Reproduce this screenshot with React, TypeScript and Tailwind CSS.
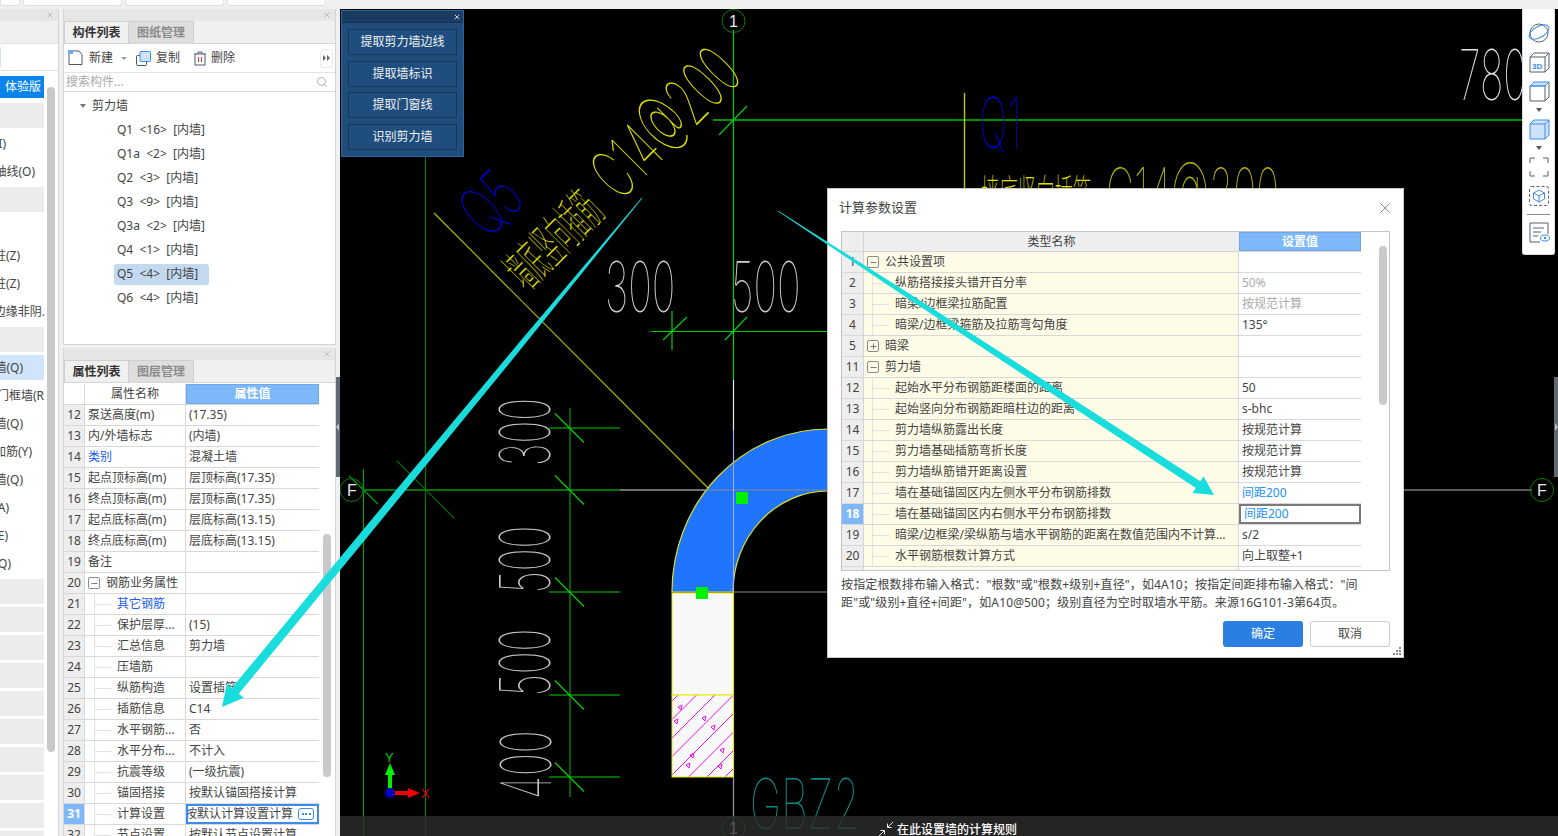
import React from "react";
import { Search, X, Minus, Plus } from "lucide-react";

const CJK = "font-['Noto_Sans','Noto_Sans_CJK_SC',sans-serif]";

/* ---------- left narrow panel ---------- */
const navRows: { t?: string; c?: string; kind?: "gray" | "sel" }[] = [
  { kind: "gray" },
  { t: "轴网(I)", c: "w-[6px]" },
  { t: "辅助轴线(O)", c: "w-[35px]" },
  { kind: "gray" },
  {},
  { t: "框架柱(Z)", c: "w-[20px]" },
  { t: "构造柱(Z)", c: "w-[20px]" },
  { t: "约束边缘非阴.", c: "w-[45px]" },
  { kind: "gray" },
  { t: "剪力墙(Q)", c: "w-[23px]", kind: "sel" },
  { t: "门框墙(R", c: "w-[44px]" },
  { t: "砌体墙(Q)", c: "w-[23px]" },
  { t: "砌体加筋(Y)", c: "w-[32px]" },
  { t: "保温墙(Q)", c: "w-[23px]" },
  { t: "暗梁(A)", c: "w-[9px]" },
  { t: "墙垛(E)", c: "w-[8px]" },
  { t: "幕墙(Q)", c: "w-[11px]" },
  { kind: "gray" },
  { kind: "gray" },
  { kind: "gray" },
  { kind: "gray" },
  { kind: "gray" },
  { kind: "gray" },
  { kind: "gray" },
  { kind: "gray" },
  { kind: "gray" },
  { kind: "gray" },
];

function PanelClose() {
  return (
    <div className="h-[12px] bg-[#e6e6e6] flex items-center justify-end pr-[3px] shrink-0">
      <X size={10} strokeWidth={1.6} className="text-[#aaaaaa]" />
    </div>
  );
}

function NavPanel() {
  return (
    <div className="w-[59px] h-full border-r border-[#d4d4d4] flex flex-col shrink-0 bg-white overflow-hidden">
      <PanelClose />
      <div className="h-[22px] bg-[#f0f0f0] shrink-0" />
      <div className="h-[28px] border-y border-[#e2e2e2] bg-white shrink-0 flex items-center">
        <div className="w-[1px] h-[20px] bg-[#cfe2f8]" />
      </div>
      <div className="flex flex-1 min-h-0">
        <div className="w-[44px] shrink-0 overflow-hidden flex flex-col">
          <div className="h-[5px] shrink-0" />
          <div className="h-[22px] bg-[#0a84ec] text-white text-[12px] flex items-center justify-end pr-[3px] shrink-0">体验版</div>
          <div className="h-[5px] shrink-0" />
          {navRows.map((r, i) => (
            <div key={i} className={`h-[25px] mb-[3px] shrink-0 ${r.kind === "gray" ? "bg-[#ececec]" : r.kind === "sel" ? "bg-[#d0e4fb]" : ""} flex items-center`}>
              {r.t && (
                <div className={`${r.c} flex justify-end whitespace-nowrap text-[12px] text-[#444]`}>
                  <span className="shrink-0">{r.t}</span>
                </div>
              )}
            </div>
          ))}
        </div>
        <div className="w-[14px] shrink-0 pl-[3px] pt-[16px] pb-[84px]">
          <div className="w-[8px] h-full rounded-full bg-[#c9c9c9]" />
        </div>
      </div>
    </div>
  );
}

/* ---------- component list panel ---------- */
const tree = ["Q1  <16>  [内墙]", "Q1a  <2>  [内墙]", "Q2  <3>  [内墙]", "Q3  <9>  [内墙]", "Q3a  <2>  [内墙]", "Q4  <1>  [内墙]", "Q5  <4>  [内墙]", "Q6  <4>  [内墙]"];

function Tabs({ a, b }: { a: string; b: string }) {
  return (
    <div className="h-[23px] bg-[#f0f0f0] flex shrink-0 border-b border-[#d6d6d6]">
      <div className="w-[65px] border-x border-t border-[#cfcfcf] font-bold text-[#333] flex items-center justify-center text-[12px]">{a}</div>
      <div className="w-[65px] border-r border-t border-[#cfcfcf] bg-[#dedede] text-[#8b8b8b] font-bold flex items-center justify-center text-[12px]">{b}</div>
    </div>
  );
}

function ListPanel() {
  return (
    <div className="h-[336px] flex flex-col border-x border-b border-[#d4d4d4] bg-white shrink-0">
      <PanelClose />
      <Tabs a="构件列表" b="图纸管理" />
      <div className="h-[29px] flex items-center border-b border-[#e4e4e4] text-[12px] text-[#444] shrink-0 pl-[4px]">
        <svg width="15" height="16" viewBox="0 0 15 16" fill="none" className="mr-[6px]">
          <path d="M1 4v10.5h13V4.5L11 1H5" stroke="#4a5670" strokeWidth="1" />
          <path d="M0 0h5v4H0z" fill="#4d94ee" opacity=".8" />
        </svg>
        <span>新建</span>
        <span className="ml-[8px] mr-[9px] w-0 h-0 border-x-[3px] border-x-transparent border-t-[3px] border-t-[#999]" />
        <svg width="15" height="15" viewBox="0 0 15 15" fill="none" className="mr-[5px]">
          <rect x="0.5" y="4.5" width="10" height="10" rx="1" stroke="#4a5670" />
          <rect x="4" y="0.5" width="10.5" height="10" rx="1" fill="#cfe2fa" stroke="#3d8bf0" />
        </svg>
        <span>复制</span>
        <svg width="14" height="15" viewBox="0 0 14 15" fill="none" className="ml-[13px] mr-[4px]">
          <path d="M1 3h12M5 3V1h4v2M2 3v11h10V3" stroke="#4a5670" />
          <path d="M5.5 6v5M8.5 6v5" stroke="#d33" />
        </svg>
        <span>删除</span>
        <div className="ml-auto mr-[2px] w-[13px] h-[19px] border border-[#e8e8e8] rounded-[3px] flex items-center justify-center">
          <svg width="8" height="6" viewBox="0 0 8 6"><path d="M0 0l3 3-3 3zM4 0l3 3-3 3z" fill="#666" /></svg>
        </div>
      </div>
      <div className="h-[19px] flex items-center border-b border-[#dcdcdc] pl-[2px] pr-[7px] text-[12px] text-[#aaaaaa] shrink-0">
        <span>搜索构件...</span>
        <Search size={12} className="ml-auto text-[#b0b0b0]" />
      </div>
      <div className="flex-1 pt-[2px] text-[12px] text-[#444]">
        <div className="h-[24px] flex items-center pl-[16px]">
          <span className="w-0 h-0 border-x-[3.5px] border-x-transparent border-t-[4px] border-t-[#777] mr-[6px]" />
          <span>剪力墙</span>
        </div>
        {tree.map((t) => (
          <div key={t} className="h-[24px] flex items-center pl-[50px]">
            <span className={`pl-[3px] h-[21px] flex items-center rounded-[3px] whitespace-pre ${t.startsWith("Q5") ? "bg-[#c3d9f0] pr-[11px]" : "pr-[3px]"}`}>{t}</span>
          </div>
        ))}
      </div>
    </div>
  );
}

/* ---------- property panel ---------- */
type P = { n: number; name: string; val?: string; tree?: boolean; blue?: boolean; group?: boolean };
const props: P[] = [
  { n: 12, name: "泵送高度(m)", val: "(17.35)" },
  { n: 13, name: "内/外墙标志", val: "(内墙)" },
  { n: 14, name: "类别", val: "混凝土墙", blue: true },
  { n: 15, name: "起点顶标高(m)", val: "层顶标高(17.35)" },
  { n: 16, name: "终点顶标高(m)", val: "层顶标高(17.35)" },
  { n: 17, name: "起点底标高(m)", val: "层底标高(13.15)" },
  { n: 18, name: "终点底标高(m)", val: "层底标高(13.15)" },
  { n: 19, name: "备注" },
  { n: 20, name: "钢筋业务属性", group: true },
  { n: 21, name: "其它钢筋", tree: true, blue: true },
  { n: 22, name: "保护层厚...", val: "(15)", tree: true },
  { n: 23, name: "汇总信息", val: "剪力墙", tree: true },
  { n: 24, name: "压墙筋", tree: true },
  { n: 25, name: "纵筋构造", val: "设置插筋", tree: true },
  { n: 26, name: "插筋信息", val: "C14", tree: true },
  { n: 27, name: "水平钢筋...", val: "否", tree: true },
  { n: 28, name: "水平分布...", val: "不计入", tree: true },
  { n: 29, name: "抗震等级", val: "(一级抗震)", tree: true },
  { n: 30, name: "锚固搭接", val: "按默认锚固搭接计算", tree: true },
  { n: 31, name: "计算设置", tree: true },
  { n: 32, name: "节点设置", val: "按默认节点设置计算", tree: true },
];

function TreeLine({ left }: { left: string }) {
  return (
    <span className={`${left} h-full border-l border-[#e2e2e2] flex items-center shrink-0`}>
      <span className="w-[16px] border-t border-[#e2e2e2]" />
    </span>
  );
}

function BoxToggle({ plus, cls }: { plus?: boolean; cls: string }) {
  return (
    <span className={`${cls} w-[12px] h-[12px] border border-[#8c8c8c] rounded-[2px] flex items-center justify-center shrink-0`}>
      {plus ? <Plus size={9} className="text-[#555]" /> : <Minus size={9} className="text-[#555]" />}
    </span>
  );
}

function PropPanel() {
  return (
    <div className="flex-1 min-h-0 flex flex-col border-x border-[#d4d4d4] bg-white overflow-hidden">
      <PanelClose />
      <Tabs a="属性列表" b="图层管理" />
      <div className="flex flex-1 min-h-0 pt-[1px]">
        <div className="w-[255px] shrink-0 text-[12px] text-[#444] overflow-hidden">
          <div className="h-[21px] flex border-b border-[#d8d8d8]">
            <div className="w-[21px] border-r border-[#d8d8d8]" />
            <div className="w-[101px] border-r border-[#d8d8d8] flex items-center justify-center">属性名称</div>
            <div className="flex-1 bg-[#7fb8f8] text-white font-bold flex items-center justify-center border border-[#6fa8e8]">属性值</div>
          </div>
          {props.map((p) => (
            <div key={p.n} className="h-[21px] flex border-b border-[#d8d8d8]">
              <div className={`w-[21px] shrink-0 border-r border-[#d8d8d8] flex items-center justify-center ${p.n === 31 ? "bg-[#7fb8f8] text-white font-bold" : "bg-[#eeeeee]"}`}>{p.n}</div>
              <div className={`w-[101px] shrink-0 border-r border-[#d8d8d8] flex items-center whitespace-nowrap ${p.blue ? "text-[#1a5cf0]" : ""}`}>
                {p.tree && <TreeLine left="ml-[9px]" />}
                {p.group && <BoxToggle cls="ml-[3px] mr-[6px]" />}
                <span className={p.tree ? "ml-[6px]" : p.group ? "" : "ml-[3px]"}>{p.name}</span>
              </div>
              {p.n === 31 ? (
                <div className="flex-1 min-w-0 border-2 border-[#3d8bf0] flex items-center justify-end overflow-hidden pr-[2px] whitespace-nowrap">
                  <span className="shrink-0">按默认计算设置计算</span>
                  <span className="ml-[5px] mr-[1px] w-[16px] h-[12px] border border-[#3d8bf0] rounded-[3px] flex items-center justify-center gap-[1.5px] shrink-0">
                    <i className="w-[2px] h-[2px] bg-[#3d8bf0]" /><i className="w-[2px] h-[2px] bg-[#3d8bf0]" /><i className="w-[2px] h-[2px] bg-[#3d8bf0]" />
                  </span>
                </div>
              ) : (
                <div className="flex-1 min-w-0 flex items-center pl-[3px] whitespace-nowrap">{p.val}</div>
              )}
            </div>
          ))}
        </div>
        <div className="w-[17px] shrink-0 pl-[4px] pt-[150px] pb-[59px]">
          <div className="w-[8px] h-full bg-[#c9c9c9] rounded-full" />
        </div>
      </div>
    </div>
  );
}

/* ---------- CAD canvas ---------- */
function Cad({ x, y, rot = 0, sx, size, fill, family = "Inter, sans-serif", children }: { x: number; y: number; rot?: number; sx: number; size: number; fill: string; family?: string; children: string }) {
  return (
    <text transform={`translate(${x} ${y}) rotate(${rot}) scale(${sx} 1)`} fontSize={size} fontFamily={family} fontWeight={100} fill={fill}>
      {children}
    </text>
  );
}

const G = "#00d000";
const DG = "#0b7a0b";
const CJKF = "'Noto Sans CJK SC', sans-serif";

/* 45° hatch lines clamped to the 61.5 × 82 rectangle */
const HX = 672;
const HY = 695;
const HW = 61.5;
const HH = 82;
function hatchLine(o: number) {
  const startOver = Math.max(0, HW - 0 - (o - HH) - HW + 0);
  const xa = Math.max(o - HH, 0);
  const ya = HH - (xa - (o - HH));
  const xb = Math.min(o, HW);
  const yb = HH - (xb - (o - HH));
  return startOver >= 0 ? [HX + xa, HY + ya, HX + xb, HY + yb] : [0, 0, 0, 0];
}
const hatch = [6, 24.5, 43, 61.5, 80, 98.5, 117, 135];

function Drawing() {
  const seg = (a: number, b: number, c: number, d: number, s = G, w = 1.2) => <line x1={a} y1={b} x2={c} y2={d} stroke={s} strokeWidth={w} />;
  const ticks = [428, 490, 592, 695, 777];
  return (
    <svg className="absolute inset-0 w-full h-full" viewBox="340 9 1218 827">
      {seg(733.5, 30, 733.5, 380)}
      {seg(733.5, 380, 733.5, 430, "#e8e8e8")}
      {seg(733.5, 430, 733.5, 836, "#9a9a9a")}
      {seg(425.5, 157, 425.5, 836, DG)}
      {seg(363.5, 469, 363.5, 836, "#0a9a0a")}
      {seg(570, 408, 570, 797, "#0a9a0a")}
      {seg(363, 490, 620, 490, "#0a9a0a", 1.5)}
      {seg(620, 490, 1532, 490, "#777777", 1.5)}
      {seg(713, 120, 1522, 120, "#00c000", 1.5)}
      {seg(651, 331.5, 828, 331.5, G, 1.2)}
      {seg(672, 311, 672, 350)}
      {seg(719, 135, 747, 106)}
      {seg(663, 340, 687, 317)}
      {seg(725, 340, 747, 317)}
      {[428, 592, 695, 777].map((y) => <g key={y}>{seg(549, y, 620, y)}</g>)}
      {ticks.map((y) => <g key={y}>{seg(555, y - 14.5, 584, y + 14.5)}</g>)}
      {seg(349, 476, 378, 504, "#0a9a0a")}
      {seg(397, 461, 454, 518, "#0a6a0a")}

      {seg(434, 213, 709, 489, "#b4b400")}
      {seg(964.5, 93, 964.5, 190, "#c8c800", 1.4)}

      <circle cx="733.5" cy="21" r="11.5" fill="none" stroke="#0a7a0a" />
      <Cad x={729} y={27} sx={1} size={16} fill="#e8e8e8" family="'Liberation Sans', sans-serif">1</Cad>
      <circle cx="351.5" cy="490" r="11.5" fill="none" stroke="#0a7a0a" />
      <Cad x={347} y={496} sx={1} size={16} fill="#e8e8e8" family="'Liberation Sans', sans-serif">F</Cad>
      <circle cx="1542" cy="490" r="11.5" fill="none" stroke="#0a7a0a" />
      <Cad x={1537} y={496} sx={1} size={16} fill="#e8e8e8" family="'Liberation Sans', sans-serif">F</Cad>
      <circle cx="733.5" cy="828" r="11.5" fill="none" stroke="#0a7a0a" />
      <Cad x={729} y={834} sx={1} size={16} fill="#e8e8e8" family="'Liberation Sans', sans-serif">1</Cad>

      {/* rotated annotation */}
      <Cad x={488} y={240} rot={-45} sx={0.62} size={68} fill="#0000e0">Q5</Cad>
      <Cad x={620} y={202} rot={-45} sx={0.58} size={68} fill="#e0e000">C14@200</Cad>
      <Cad x={527} y={292} rot={-45} sx={0.37} size={50} fill="#d8d800" family={CJKF}>墙底竖向插筋</Cad>

      {/* straight annotation */}
      <Cad x={979} y={148} sx={0.54} size={70} fill="#0000d8">Q1</Cad>
      <Cad x={1106} y={217} sx={0.57} size={68} fill="#b8b800">C14@200</Cad>
      <Cad x={981} y={213} sx={0.4} size={46} fill="#e0e000" family={CJKF}>墙底竖向插筋</Cad>

      {/* dimension text */}
      <Cad x={605} y={312} sx={0.57} size={70} fill="#d0d0d0">300</Cad>
      <Cad x={731} y={312} sx={0.57} size={70} fill="#d0d0d0">500</Cad>
      <Cad x={1459} y={100} sx={0.56} size={70} fill="#e0e0e0">780</Cad>
      <Cad x={550} y={466} rot={-90} sx={0.55} size={70} fill="#c8c8c8">300</Cad>
      <Cad x={550} y={593} rot={-90} sx={0.55} size={70} fill="#c8c8c8">500</Cad>
      <Cad x={550} y={696} rot={-90} sx={0.55} size={70} fill="#c8c8c8">500</Cad>
      <Cad x={551} y={799} rot={-90} sx={0.55} size={70} fill="#c8c8c8">400</Cad>
      <Cad x={750} y={829} sx={0.6} size={70} fill="#0a8a8a">GBZ2</Cad>

      {/* wall */}
      <path d="M672 592A156 163 0 0 1 828 429L828 491A95 101 0 0 0 733 592Z" fill="#1f75fe" stroke="#e0e020" strokeWidth="1.2" />
      {seg(733, 592, 828, 592, "#8a8a8a")}
      {seg(620, 490, 828, 490, "#8a8a8a", 1.2)}
      {seg(733.5, 430, 733.5, 592, "#a8a8ff", 1)}
      <rect x="672" y="593" width="61.5" height="102" fill="#f8f8f8" stroke="#e8e800" />
      <rect x="736" y="492" width="12" height="12" fill="#00f000" />
      <rect x="696" y="587" width="12" height="12" fill="#00f000" />
      <rect x="672" y="695" width="61.5" height="82" fill="#f8f8f8" />
      {hatch.map((o) => {
        const [a, b, c, d] = hatchLine(o);
        return <path key={o} d={`M${a} ${b}L${c} ${d}`} fill="none" stroke="#f010f0" strokeWidth="1" />;
      })}
      {[[678, 707], [702, 718], [674, 721], [711, 727], [690, 755], [686, 765], [718, 766], [720, 750]].map(([a, b]) => (
        <polygon key={a} points={`${a},${b} ${a + 4},${b - 2} ${a + 3},${b + 3}`} fill="none" stroke="#f010f0" />
      ))}
      <rect x="672" y="695" width="61.5" height="82" fill="none" stroke="#e8e800" />

      {/* axis */}
      <line x1="390" y1="793" x2="390" y2="772" stroke="#00ee00" strokeWidth="4" />
      <polygon points="390,763 385,775 395,775" fill="#00ee00" />
      <line x1="390" y1="793" x2="410" y2="793" stroke="#ee0000" strokeWidth="4" />
      <polygon points="420,793 408,788 408,798" fill="#ee0000" />
      <circle cx="390" cy="793" r="5" fill="#0000c0" />
      <Cad x={385} y={762} sx={1} size={13} fill="#00d000" family="'Liberation Sans', sans-serif">Y</Cad>
      <Cad x={421} y={798} sx={1} size={13} fill="#e00000" family="'Liberation Sans', sans-serif">X</Cad>
    </svg>
  );
}

function FloatPanel() {
  return (
    <div className="absolute left-[1px] top-[1px] w-[123px] h-[147px] bg-[#1f4e7e] border border-[#2d639c] text-[12px] text-[#f0f0f0] flex flex-col">
      <div className="h-[12px] bg-[#1a3c60] border-b border-[#16304e] flex items-center justify-end pr-[2px] shrink-0">
        <X size={8} strokeWidth={3} className="text-[#c0d0e0]" />
      </div>
      <div className="flex flex-col gap-[5.67px] px-[6px] pt-[6px]">
        {["提取剪力墙边线", "提取墙标识", "提取门窗线", "识别剪力墙"].map((t) => (
          <div key={t} className="h-[26px] border border-[#17375a] flex items-center justify-center">{t}</div>
        ))}
      </div>
    </div>
  );
}

/* ---------- view toolbar ---------- */
const I = "#56606e";
const B = "#3d8bf0";
function Caret() {
  return <span className="w-0 h-0 border-x-[3px] border-x-transparent border-t-[4px] border-t-[#555] my-[1px]" />;
}
function ViewBar() {
  return (
    <div className="absolute right-[3px] top-0 w-[33px] h-[246px] bg-white rounded-b-[3px] border border-[#dcdcdc] border-t-0 flex flex-col items-center pt-[13px]">
      <svg width="22" height="22" viewBox="0 0 22 22" fill="none">
        <circle cx="11" cy="11" r="9" stroke={I} />
        <ellipse cx="11" cy="10" rx="11" ry="5.5" transform="rotate(-30 11 10)" stroke={B} />
      </svg>
      <svg width="22" height="22" viewBox="0 0 22 22" fill="none" className="mt-[7px]">
        <path d="M2 6h15v15H2zM2 6l4-4h15v15l-4 4M17 6l4-4" stroke={I} />
        <text x="4" y="18" fontSize="8" fontWeight="700" fontFamily="Liberation Sans" fill={B}>3D</text>
      </svg>
      <svg width="22" height="22" viewBox="0 0 22 22" fill="none" className="mt-[7px]">
        <path d="M2 6v15h15V6M17 21l4-4V2" stroke={I} />
        <path d="M2 6l4-4h15l-4 4z" fill="#cfe2fa" stroke={B} />
        <path d="M2 6h15" stroke={B} />
      </svg>
      <div className="mt-[5px] mb-[5px] flex"><Caret /></div>
      <svg width="22" height="22" viewBox="0 0 22 22" fill="none">
        <path d="M2 6h15v15H2zM2 6l4-4h15v15l-4 4M17 6l4-4" fill="#cfe2fa" stroke={B} />
      </svg>
      <div className="mt-[5px] mb-[5px] flex"><Caret /></div>
      <svg width="22" height="22" viewBox="0 0 22 22" fill="none">
        <path d="M2 7V2h5M15 2h5v5M20 15v5h-5M7 20H2v-5" stroke={I} />
      </svg>
      <svg width="22" height="22" viewBox="0 0 22 22" fill="none" className="mt-[7px]">
        <rect x="1.5" y="1.5" width="19" height="19" rx="2" stroke={I} strokeDasharray="3 2" />
        <path d="M11 5l5.5 3v6L11 17l-5.5-3V8zM5.5 8L11 11l5.5-3M11 11v6" stroke={B} />
      </svg>
      <div className="w-[23px] border-t border-[#888] mt-[7px]" />
      <svg width="22" height="22" viewBox="0 0 22 22" fill="none" className="mt-[6px]">
        <path d="M20 13V2H2v19h10" stroke={I} />
        <path d="M5 7h11M5 11h8M5 15h5" stroke={I} />
        <ellipse cx="17" cy="17" rx="4.5" ry="3" stroke={B} />
        <circle cx="17" cy="17" r="1.2" fill={B} />
      </svg>
    </div>
  );
}

/* ---------- dialog ---------- */
type R = { n: number; name?: string; val?: string; kind?: "minus" | "plus"; tone?: string };
const rows: R[] = [
  { n: 1, name: "公共设置项", kind: "minus" },
  { n: 2, name: "纵筋搭接接头错开百分率", val: "50%", tone: "text-[#aaaaaa]" },
  { n: 3, name: "暗梁/边框梁拉筋配置", val: "按规范计算", tone: "text-[#aaaaaa]" },
  { n: 4, name: "暗梁/边框梁箍筋及拉筋弯勾角度", val: "135°" },
  { n: 5, name: "暗梁", kind: "plus" },
  { n: 11, name: "剪力墙", kind: "minus" },
  { n: 12, name: "起始水平分布钢筋距楼面的距离", val: "50" },
  { n: 13, name: "起始竖向分布钢筋距暗柱边的距离", val: "s-bhc" },
  { n: 14, name: "剪力墙纵筋露出长度", val: "按规范计算" },
  { n: 15, name: "剪力墙基础插筋弯折长度", val: "按规范计算" },
  { n: 16, name: "剪力墙纵筋错开距离设置", val: "按规范计算" },
  { n: 17, name: "墙在基础锚固区内左侧水平分布钢筋排数", val: "间距200", tone: "text-[#1e90ff]" },
  { n: 18, name: "墙在基础锚固区内右侧水平分布钢筋排数", val: "间距200", tone: "text-[#1e90ff]" },
  { n: 19, name: "暗梁/边框梁/梁纵筋与墙水平钢筋的距离在数值范围内不计算...", val: "s/2" },
  { n: 20, name: "水平钢筋根数计算方式", val: "向上取整+1" },
];

function Dialog() {
  return (
    <div className="absolute left-[487px] top-[179px] w-[577px] h-[470px] bg-white border border-[#c8c8c8] text-[12px] text-[#444] flex flex-col">
      <div className="h-[42px] flex items-center pl-[11px] pr-[9px] pb-[4px] text-[13px] shrink-0">
        <span>计算参数设置</span>
        <X size={18} strokeWidth={1.1} className="ml-auto text-[#777]" />
      </div>
      <div className="mx-[13px] h-[340px] border border-[#c4c4c4] flex overflow-hidden shrink-0">
        <div className="w-[519px] shrink-0">
          <div className="h-[20px] flex border-b border-[#d4d4d4]">
            <div className="w-[22px] bg-[#eeeeee] border-r border-[#d4d4d4]" />
            <div className="w-[375px] bg-[#eeeeee] flex items-center justify-center">类型名称</div>
            <div className="flex-1 bg-[#7fb8f8] text-white font-bold flex items-center justify-center border border-[#6fa8e8]">设置值</div>
          </div>
          {rows.map((r) => (
            <div key={r.n} className="h-[21px] flex border-b border-[#d8d8d8]">
              <div className={`w-[22px] shrink-0 border-r border-[#d4d4d4] flex items-center justify-center ${r.n === 18 ? "bg-[#7fb8f8] text-white font-bold" : "bg-[#eeeeee]"}`}>{r.n}</div>
              <div className="w-[375px] shrink-0 bg-[#fefce6] border-r border-[#d8d8d8] flex items-center whitespace-nowrap">
                {r.kind ? (
                  <>
                    <BoxToggle plus={r.kind === "plus"} cls="ml-[3px] mr-[6px]" />
                    <span>{r.name}</span>
                  </>
                ) : (
                  <>
                    <TreeLine left="ml-[8px]" />
                    <span className="ml-[6px]">{r.name}</span>
                  </>
                )}
              </div>
              <div className={`flex-1 min-w-0 flex items-center pl-[3px] ${r.tone ?? ""} ${r.n === 18 ? "border-2 border-[#7a7a7a] pl-[2px]" : ""}`}>{r.val}</div>
            </div>
          ))}
          <div className="h-[4px] flex">
            <div className="w-[22px] bg-[#eeeeee] border-r border-[#d4d4d4]" />
            <div className="w-[375px] bg-[#fefce6] border-r border-[#d8d8d8]" />
          </div>
        </div>
        <div className="flex-1 pl-[18px] pt-[14px] pb-[165px]">
          <div className="w-[8px] h-full rounded-full bg-[#c9c9c9]" />
        </div>
      </div>
      <div className="mx-[13px] mt-[5px] leading-[18px] tracking-[0.13px] text-[#444] h-[36px] shrink-0">
        按指定根数排布输入格式："根数"或"根数+级别+直径"，如4A10；按指定间距排布输入格式："间距"或"级别+直径+间距"，如A10@500；级别直径为空时取墙水平筋。来源16G101-3第64页。
      </div>
      <div className="flex justify-end gap-[7px] pr-[13px] mt-[9px]">
        <div className="w-[80px] h-[26px] rounded-[3px] bg-[#2b7fe0] text-white flex items-center justify-center">确定</div>
        <div className="w-[80px] h-[26px] rounded-[3px] border border-[#cccccc] flex items-center justify-center">取消</div>
      </div>
      <svg width="8" height="8" viewBox="0 0 8 8" className="absolute right-[2px] bottom-[2px]">
        <path d="M6 0h2v2H6zM3 3h2v2H3zM6 3h2v2H6zM0 6h2v2H0zM3 6h2v2H3zM6 6h2v2H6z" fill="#888" />
      </svg>
    </div>
  );
}

/* ---------- overlay arrows ---------- */
function arrow(tx: number, ty: number, px: number, py: number, head: number, hw: number, w: number) {
  const L = Math.hypot(px - tx, py - ty);
  const dx = (px - tx) / L;
  const dy = (py - ty) / L;
  const nx = -dy;
  const ny = dx;
  const at = (d: number, o: number) => `${(tx + dx * d + nx * o).toFixed(1)},${(ty + dy * d + ny * o).toFixed(1)}`;
  const b = L - head;
  return [at(0, 0.4), at(b * 0.3, w * 0.3), at(b * 0.6, w * 0.42), at(b, w / 2), at(b, hw), at(L, 0), at(b, -hw), at(b, -w / 2), at(b * 0.6, -w * 0.42), at(b * 0.3, -w * 0.3), at(0, -0.4)].join(" ");
}

function Arrows() {
  return (
    <svg className="absolute inset-0 w-full h-full pointer-events-none" viewBox="0 0 1558 836">
      <polygon points={arrow(642, 198, 222, 707, 21, 11, 9)} fill="#19dcdc" />
      <polygon points={arrow(778, 211, 1214, 495, 19, 10, 8)} fill="#19dcdc" />
    </svg>
  );
}

function Handle({ left }: { left?: boolean }) {
  return (
    <div className={`w-[4px] h-[100px] bg-[#606a75] flex items-center ${left ? "justify-start" : "justify-end"}`}>
      <span className={`w-0 h-0 border-y-[4px] border-y-transparent ${left ? "border-r-[3px] border-r-[#b8bec6]" : "border-l-[3px] border-l-[#b8bec6]"}`} />
    </div>
  );
}

/* ---------- page ---------- */
export default function App() {
  return (
    <div className={`relative w-[1558px] h-[836px] overflow-hidden bg-[#f0f0f0] flex flex-col ${CJK}`}>
      <div className="h-[9px] shrink-0 flex gap-[3px] items-start">
        <div className="w-[20px] h-[6px] bg-white border-x border-b border-[#e0e0e0] rounded-b-[3px]" />
        <div className="w-[99px] h-[6px] bg-white border-x border-b border-[#e0e0e0] rounded-b-[3px]" />
        <div className="w-[99px] h-[6px] bg-white border-x border-b border-[#e0e0e0] rounded-b-[3px]" />
        <div className="w-[99px] h-[6px] bg-white border-x border-b border-[#e0e0e0] rounded-b-[3px]" />
      </div>
      <div className="flex flex-1 min-h-0">
        <NavPanel />
        <div className="w-[4px] shrink-0" />
        <div className="w-[273px] shrink-0 flex flex-col gap-[3px]">
          <ListPanel />
          <PropPanel />
        </div>
        <div className="w-[4px] shrink-0 flex items-center pt-[9px]">
          <Handle left />
        </div>
        <div className="flex-1 min-w-0 relative bg-black overflow-hidden">
          <Drawing />
          <FloatPanel />
          <ViewBar />
          <div className="absolute right-0 top-[368px]"><Handle /></div>
          <Dialog />
          <div className="absolute left-0 right-0 bottom-0 h-[20px] bg-[#2d2d2d]/80 text-white text-[12px] font-medium flex items-start pt-[5px] pl-[538px] overflow-hidden">
            <svg width="16" height="16" viewBox="0 0 16 16" fill="none" className="mr-[3px]">
              <path d="M15 1L9.5 6.5M9.5 2.5v4h4M1 15l5.5-5.5M2.5 9.5h4v4" stroke="#e8e8e8" />
            </svg>
            <span>在此设置墙的计算规则</span>
          </div>
        </div>
      </div>
      <Arrows />
    </div>
  );
}
